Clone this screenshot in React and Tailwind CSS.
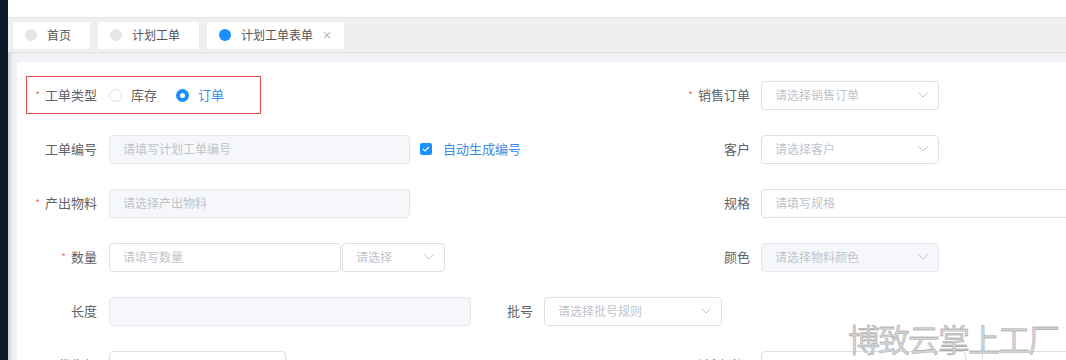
import React from "react";

const Chevron = () => (
  <svg width="10" height="6" viewBox="0 0 10 6" fill="none" className="shrink-0">
    <path d="M0.5 0.5L5 5L9.5 0.5" stroke="#c0c4cc" strokeWidth="1" />
  </svg>
);

const Label = ({ text, req, className = "w-[80px]" }) => (
  <div className={`flex shrink-0 items-center justify-end text-[13px] text-[#606266] ${className}`}>
    {req && <span className="mr-[5px] text-[10px] leading-none text-[#f56c6c]">*</span>}
    {text}
  </div>
);

const Input = ({ placeholder, disabled, className }) => (
  <div
    className={`flex h-[29px] shrink-0 items-center rounded-[4px] border pl-[13px] text-[12px] text-[#c0c4cc] ${
      disabled ? "border-[#e4e7ed] bg-[#f5f7fa]" : "border-[#dcdfe6] bg-white"
    } ${className}`}
  >
    {placeholder}
  </div>
);

const Select = ({ placeholder, disabled, className }) => (
  <div
    className={`flex h-[29px] shrink-0 items-center justify-between rounded-[4px] border pl-[13px] pr-[10px] text-[12px] text-[#c0c4cc] ${
      disabled ? "border-[#e4e7ed] bg-[#f5f7fa]" : "border-[#dcdfe6] bg-white"
    } ${className}`}
  >
    <span>{placeholder}</span>
    <Chevron />
  </div>
);

const Tab = ({ text, active }) => (
  <div
    className={`flex h-[27px] shrink-0 items-center rounded-[2px] bg-white pl-[12px] text-[12px] text-[#555] ${
      active ? "pr-[12px]" : "pr-[19px]"
    }`}
  >
    <span className={`h-[12px] w-[12px] rounded-full ${active ? "bg-[#1890ff]" : "bg-[#e4e6ea]"}`} />
    <span className="ml-[10px]">{text}</span>
    {active && <span className="ml-[9px] text-[10px] leading-none text-[#999]">×</span>}
  </div>
);

export default function App() {
  return (
    <div className="relative flex h-[360px] w-[1066px] overflow-hidden bg-white font-['Noto_Sans_CJK_SC','Noto_Sans',sans-serif]">
      <div className="w-[8px] shrink-0 bg-[#0c1a29]" />

      <div className="flex min-w-0 flex-1 flex-col">
        <div className="h-[17px] shrink-0 bg-white" />

        {/* tabs */}
        <div className="flex h-[36px] shrink-0 items-center gap-[8px] border-y border-[#e2e2e2] bg-[#efefef] pl-[5px]">
          <Tab text="首页" />
          <Tab text="计划工单" />
          <Tab text="计划工单表单" active />
        </div>

        <div className="flex-1 bg-[#f0f2f5] pl-[9px] pt-[9px] shadow-[inset_5px_0_5px_-3px_rgba(0,0,0,0.18)]">
          <div className="h-full rounded-tl-[4px] bg-white pt-[6px]">

            {/* row 1 */}
            <div className="flex h-[54px] items-center">
              <div className="flex w-[653px] shrink-0 items-center">
                <div className="ml-[9px] flex h-[38px] w-[235px] items-center border border-[#e5484d]">
                  <Label text="工单类型" req className="w-[70px]" />
                  <div className="ml-[12px] flex items-center text-[13px]">
                    <span className="h-[13px] w-[13px] rounded-full border border-[#dcdfe6] bg-white" />
                    <span className="ml-[9px] text-[#606266]">库存</span>
                    <span className="ml-[19px] flex h-[13px] w-[13px] items-center justify-center rounded-full bg-[#1890ff]">
                      <span className="h-[5px] w-[5px] rounded-full bg-white" />
                    </span>
                    <span className="ml-[9px] text-[#3a8ee6]">订单</span>
                  </div>
                </div>
              </div>
              <Label text="销售订单" req />
              <Select placeholder="请选择销售订单" className="ml-[11px] w-[178px]" />
            </div>

            {/* row 2 */}
            <div className="flex h-[54px] items-center">
              <div className="flex w-[653px] shrink-0 items-center">
                <Label text="工单编号" />
                <Input placeholder="请填写计划工单编号" disabled className="ml-[12px] w-[301px]" />
                <span className="ml-[10px] flex h-[12px] w-[12px] items-center justify-center rounded-[2px] bg-[#1890ff]">
                  <svg width="8" height="6" viewBox="0 0 8 6" fill="none">
                    <path d="M1 3L3 5L7 1" stroke="white" strokeWidth="1.2" />
                  </svg>
                </span>
                <span className="ml-[11px] text-[13px] text-[#3a8ee6]">自动生成编号</span>
              </div>
              <Label text="客户" />
              <Select placeholder="请选择客户" className="ml-[11px] w-[178px]" />
            </div>

            {/* row 3 */}
            <div className="flex h-[54px] items-center">
              <div className="flex w-[653px] shrink-0 items-center">
                <Label text="产出物料" req />
                <Input placeholder="请选择产出物料" disabled className="ml-[12px] w-[301px]" />
              </div>
              <Label text="规格" />
              <Input placeholder="请填写规格" className="ml-[11px] w-[330px]" />
            </div>

            {/* row 4 */}
            <div className="flex h-[54px] items-center">
              <div className="flex w-[653px] shrink-0 items-center">
                <Label text="数量" req />
                <Input placeholder="请填写数量" className="ml-[12px] w-[232px]" />
                <Select placeholder="请选择" className="ml-[1px] w-[103px]" />
              </div>
              <Label text="颜色" />
              <Select placeholder="请选择物料颜色" disabled className="ml-[11px] w-[178px]" />
            </div>

            {/* row 5 */}
            <div className="flex h-[54px] items-center">
              <Label text="长度" />
              <Input disabled className="ml-[12px] w-[362px]" />
              <Label text="批号" className="ml-[12px] w-[50px]" />
              <Select placeholder="请选择批号规则" className="ml-[11px] w-[178px]" />
            </div>

            {/* row 6 */}
            <div className="flex h-[54px] items-center">
              <div className="flex w-[653px] shrink-0 items-center">
                <Label text="优先级" />
                <Input className="ml-[12px] w-[177px]" />
              </div>
              <Label text="计划时间" />
              <Input className="ml-[11px] w-[205px]" />
              <Input className="ml-[16px] w-[120px]" />
            </div>
          </div>
        </div>
      </div>

      {/* watermark */}
      <div className="pointer-events-none absolute left-[848px] top-[316px] text-[32px] leading-[44px] tracking-[-2px] text-[#d2d2d2] [-webkit-text-stroke:0.3px_#8a8a8a]">
        博致云掌上工厂
      </div>
    </div>
  );
}
